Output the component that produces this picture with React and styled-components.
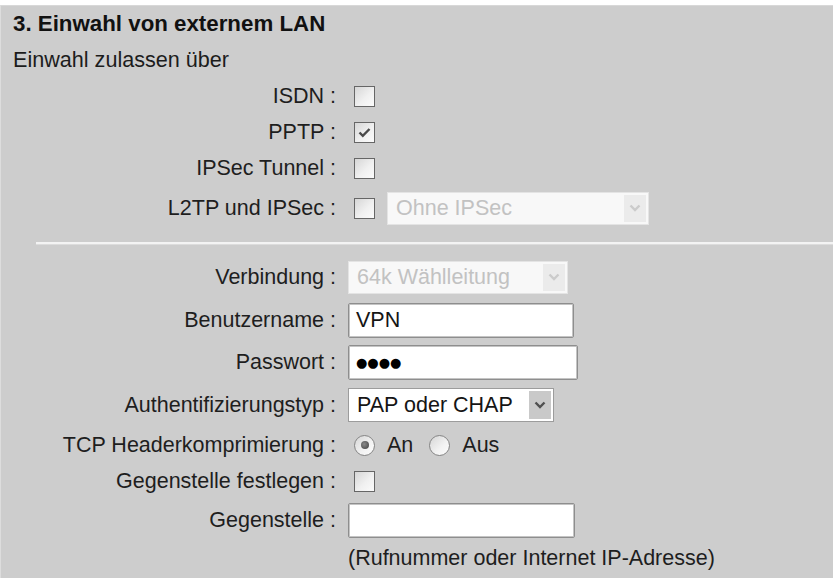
import React from 'react';
import styled, { createGlobalStyle } from 'styled-components';

const Global = createGlobalStyle`
  html, body { margin: 0; padding: 0; background: #ffffff; }
  body { font-family: "Liberation Sans", Arial, sans-serif; }
`;

const Page = styled.div`
  width: 834px;
  height: 578px;
  background: #ffffff;
  padding-top: 5px;
  box-sizing: border-box;
  overflow: hidden;
`;

const Panel = styled.div`
  width: 833px;
  height: 573px;
  background: #cdcdcd;
  border-top: 1px solid #d8d8d8;
  border-left: 1px solid #dddddd;
  box-sizing: border-box;
  padding: 5px 0 0 12px;
`;

const Title = styled.div`
  font-size: 22.3px;
  font-weight: bold;
  line-height: 26px;
  color: #111111;
`;

const Subtitle = styled.div`
  margin-top: 10px;
  font-size: 21.6px;
  line-height: 26px;
  color: #1c1c1c;
`;

const Form = styled.div`
  margin-top: 5px;
  display: flex;
  flex-direction: column;
`;

const Row = styled.div`
  display: grid;
  grid-template-columns: 323px 1fr;
  column-gap: 12px;
  align-items: center;
  height: ${(p) => p.$h}px;
  margin-top: ${(p) => p.$mt || 0}px;
`;

const Label = styled.div`
  text-align: right;
  white-space: nowrap;
  font-size: 21.5px;
  color: #1e1e1e;
`;

const Controls = styled.div`
  display: flex;
  align-items: center;
  font-size: 21.5px;
  color: #1e1e1e;
  white-space: nowrap;
`;

const Separator = styled.div`
  margin-top: ${(p) => p.$mt}px;
  margin-left: 23px;
  height: 2px;
  background: #f3f3f3;
  box-shadow: 0 1px 0 #dcdcdc;
`;

const Box = styled.span`
  display: inline-flex;
  align-items: center;
  justify-content: center;
  width: 21px;
  height: 21px;
  box-sizing: border-box;
  margin-left: 6px;
  border: 1px solid #666666;
  background: linear-gradient(135deg, #d6d6d6 0%, #f0f0f0 55%, #fbfbfb 100%);
`;

const Checkbox = ({ checked }) => (
  <Box>
    {checked && (
      <svg width="13" height="11" viewBox="0 0 13 11">
        <path d="M1.5 5.5 L4.8 8.8 L11.5 2" fill="none" stroke="#4a4a4a" strokeWidth="2.4" />
      </svg>
    )}
  </Box>
);

const SelectBox = styled.div`
  display: flex;
  align-items: center;
  box-sizing: border-box;
  width: ${(p) => p.$w}px;
  height: ${(p) => p.$hh}px;
  margin-left: ${(p) => p.$ml || 0}px;
  background: ${(p) => (p.$disabled ? '#f8f8f8' : '#ffffff')};
  border: 1px solid ${(p) => (p.$disabled ? '#e4e4e4' : '#9c9c9c')};
  color: ${(p) => (p.$disabled ? '#c2c2c2' : '#151515')};
  font-size: 21.5px;
  padding: 2px;
`;

const SelectText = styled.span`
  flex: 1;
  padding-left: 6px;
  overflow: hidden;
`;

const ArrowBox = styled.span`
  display: flex;
  align-items: center;
  justify-content: center;
  width: 22px;
  align-self: stretch;
  background: ${(p) => (p.$disabled ? '#ebebeb' : '#c9c9c9')};
`;

const Select = ({ value, disabled, w, h, ml }) => (
  <SelectBox $w={w} $hh={h} $ml={ml} $disabled={disabled}>
    <SelectText>{value}</SelectText>
    <ArrowBox $disabled={disabled}>
      <svg width="12" height="8" viewBox="0 0 12 8">
        <path d="M1.5 1.5 L6 6 L10.5 1.5" fill="none" stroke={disabled ? '#cbcbcb' : '#505050'} strokeWidth="2.4" />
      </svg>
    </ArrowBox>
  </SelectBox>
);

const TextInput = styled.div`
  display: flex;
  align-items: center;
  box-sizing: border-box;
  width: ${(p) => p.$w}px;
  height: 35px;
  background: #ffffff;
  border: 1px solid #8e8e8e;
  box-shadow: inset 0 0 0 1px #c4c4c4;
  border-radius: 2px;
  padding-left: 7px;
  font-size: 21.5px;
  color: #151515;
`;

const Mask = styled.span`
  font-family: "DejaVu Sans", sans-serif;
  font-size: 13px;
  letter-spacing: 0px;
  color: #000000;
`;

const RadioCircle = styled.span`
  display: inline-flex;
  align-items: center;
  justify-content: center;
  width: 21px;
  height: 21px;
  box-sizing: border-box;
  border-radius: 50%;
  border: 1px solid #858585;
  background: linear-gradient(135deg, #d6d6d6 0%, #f3f3f3 60%, #fcfcfc 100%);
  margin-left: ${(p) => p.$ml}px;
  margin-right: 12px;
`;

const Dot = styled.span`
  width: 8px;
  height: 8px;
  border-radius: 50%;
  background: radial-gradient(circle at 40% 40%, #8a8a8a, #3e3e3e);
`;

const Radio = ({ checked, ml }) => (
  <RadioCircle $ml={ml}>{checked && <Dot />}</RadioCircle>
);

const Hint = styled.span`
  font-size: 21.5px;
  color: #1e1e1e;
`;

export default function App() {
  return (
    <>
      <Global />
      <Page>
        <Panel>
          <Title>3. Einwahl von externem LAN</Title>
          <Subtitle>Einwahl zulassen über</Subtitle>
          <Form>
            <Row $h={36}>
              <Label>ISDN :</Label>
              <Controls><Checkbox /></Controls>
            </Row>
            <Row $h={36}>
              <Label>PPTP :</Label>
              <Controls><Checkbox checked /></Controls>
            </Row>
            <Row $h={36}>
              <Label>IPSec Tunnel :</Label>
              <Controls><Checkbox /></Controls>
            </Row>
            <Row $h={44}>
              <Label>L2TP und IPSec :</Label>
              <Controls>
                <Checkbox />
                <Select value="Ohne IPSec" disabled w={262} h={33} ml={12} />
              </Controls>
            </Row>
            <Separator $mt={12} />
            <Row $h={42} $mt={12}>
              <Label>Verbindung :</Label>
              <Controls>
                <Select value="64k Wählleitung" disabled w={220} h={33} />
              </Controls>
            </Row>
            <Row $h={44}>
              <Label>Benutzername :</Label>
              <Controls><TextInput $w={226}>VPN</TextInput></Controls>
            </Row>
            <Row $h={40}>
              <Label>Passwort :</Label>
              <Controls><TextInput $w={230}><Mask>●●●●</Mask></TextInput></Controls>
            </Row>
            <Row $h={46}>
              <Label>Authentifizierungstyp :</Label>
              <Controls>
                <Select value="PAP oder CHAP" w={206} h={34} />
              </Controls>
            </Row>
            <Row $h={34}>
              <Label>TCP Headerkomprimierung :</Label>
              <Controls>
                <Radio checked ml={6} />
                <span>An</span>
                <Radio ml={16} />
                <span>Aus</span>
              </Controls>
            </Row>
            <Row $h={38}>
              <Label>Gegenstelle festlegen :</Label>
              <Controls><Checkbox /></Controls>
            </Row>
            <Row $h={40}>
              <Label>Gegenstelle :</Label>
              <Controls><TextInput $w={227} /></Controls>
            </Row>
            <Row $h={36}>
              <div />
              <Controls><Hint>(Rufnummer oder Internet IP-Adresse)</Hint></Controls>
            </Row>
          </Form>
        </Panel>
      </Page>
    </>
  );
}
